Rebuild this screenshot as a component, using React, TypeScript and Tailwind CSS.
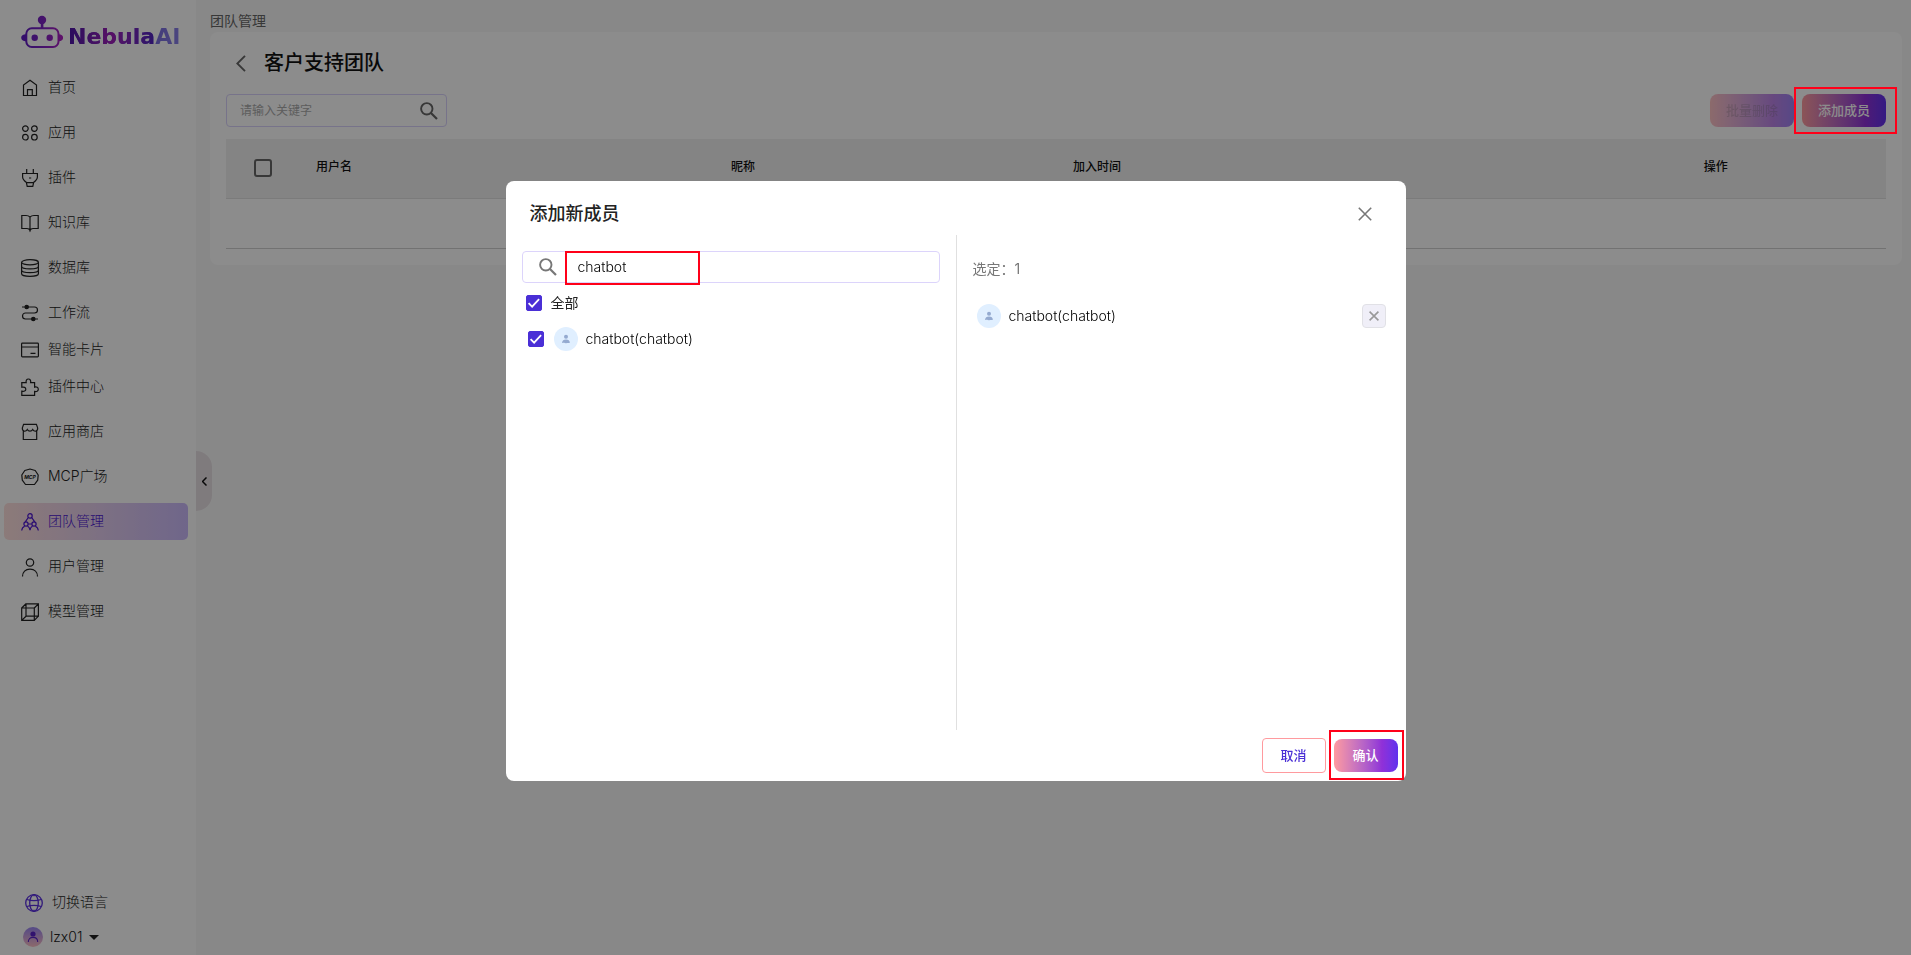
import { useState } from 'react';
import type { ReactNode } from 'react';

const navItems = [
  { label: '首页', icon: 'home' },
  { label: '应用', icon: 'apps' },
  { label: '插件', icon: 'plug' },
  { label: '知识库', icon: 'book' },
  { label: '数据库', icon: 'database' },
  { label: '工作流', icon: 'flow', tight: true },
  { label: '智能卡片', icon: 'card', tight: true },
  { label: '插件中心', icon: 'puzzle' },
  { label: '应用商店', icon: 'store' },
  { label: 'MCP广场', icon: 'mcp' },
  { label: '团队管理', icon: 'team', active: true },
  { label: '用户管理', icon: 'user' },
  { label: '模型管理', icon: 'cube' },
];

const icons: Record<string, ReactNode> = {
  home: <path d="M2.5 16.5V6L9 1.3 15.5 6v10.5zM6.5 16.5v-5.8h4.8v5.8" />,
  apps: (
    <>
      <circle cx="4.4" cy="4.6" r="2.8" />
      <circle cx="13.4" cy="4.6" r="2.8" />
      <circle cx="4.4" cy="13.2" r="2.8" />
      <circle cx="13.4" cy="13.2" r="2.8" />
    </>
  ),
  plug: <path d="M5.7 0v4.5M12.3 0v4.5M1 4.5h16M1.6 4.5v3.4c0 2.6 2.6 4.6 4.2 5.8h6.4c1.600-1.200 4.200-3.200 4.200-5.800V4.500M5.400 13.700l.8 3.600h5.600l.8-3.600M8 9h2.200" />,
  book: <path d="M9 3.200C8 2 6.500 1.500 5 1.500H.8v13H6c1.500 0 2.500.5 3 2 .5-1.500 1.500-2 3-2h5.200v-13H13c-1.500 0-3 .5-4 1.700zM9 3.200V17.500" />,
  database: (
    <>
      <ellipse cx="9" cy="3.300" rx="8.400" ry="2.600" />
      <path d="M.6 3.300v11.400c0 1.500 3.800 2.700 8.400 2.700s8.400-1.200 8.400-2.700V3.300M.6 7.200c0 1.500 3.800 2.600 8.400 2.600s8.400-1.100 8.400-2.600M.6 11c0 1.500 3.800 2.600 8.400 2.600s8.400-1.100 8.400-2.600" />
    </>
  ),
  flow: (
    <>
      <path d="M1 3h12.500a3 3 0 0 1 0 6h-9a3 3 0 0 0 0 6H17" />
      <circle cx="5.700" cy="3" r="1.700" fill="currentColor" />
      <circle cx="12.300" cy="15" r="1.700" fill="currentColor" />
    </>
  ),
  card: (
    <>
      <rect x=".6" y="2.200" width="16.800" height="13.600" rx=".8" />
      <path d="M.6 6h16.800M9.500 12.400h5" />
    </>
  ),
  puzzle: <path d="M.8 4.700h4.400c-.5-2 .4-3.700 2.200-3.700s2.700 1.700 2.200 3.700h4v4.400c2-.6 3.700.4 3.700 2.200s-1.700 2.600-3.700 2.100v4H.8v-4.200c2.300.5 4-.3 4-2s-1.700-2.500-4-2z" />,
  store: <path d="M2.300 8v8.500h13.400V8M2.600 1.300h12.800L16.700 5c0 4-3.500 4-5 1.500-1.200 2.200-4.200 2.200-5.400 0C4.800 9 1.300 9 1.300 5z" />,
  mcp: (
    <>
      <path d="M9 1l5.200 1.500 3 4.500-.5 5.200L13.500 16.500h-9L1.300 12.200.8 7l3-4.500z" strokeLinejoin="round" />
      <text x="9" y="11" textAnchor="middle" fontSize="5" fontWeight="700" fontStyle="italic" fill="currentColor" stroke="none">MCP</text>
    </>
  ),
  team: (
    <>
      <circle cx="9" cy="2.900" r="2.200" />
      <circle cx="5" cy="11" r="2.100" />
      <circle cx="13" cy="11" r="2.100" />
      <path d="M7.300 4.500L4.300 8.900M10.700 4.500l3 4.400M.7 17.500c.2-2.300 1.400-3.700 3-4.300M6.500 13c1.400.8 2.300 2.200 2.500 4.300.2-2.100 1.100-3.500 2.500-4.300M14.300 13.200c1.600.6 2.800 2 3 4.300M7.200 11h3.600" />
    </>
  ),
  user: (
    <>
      <circle cx="9" cy="4.500" r="3.700" />
      <path d="M1.500 18.500c0-4.500 3-7.300 7.500-7.300s7.500 2.800 7.500 7.300" />
    </>
  ),
  cube: <path d="M.7 5h12.600v12.400H.7zM5 .8h12.400v12.400H5zM.7 5L5 .8M13.300 5l4.100-4.200M.7 17.400L5 13.200M13.300 17.400l4.100-4.200" />,
};

function NavIcon({ name }: { name: string }) {
  return (
    <svg className="h-[18px] w-[18px] shrink-0 overflow-visible" viewBox="0 0 18 18" fill="none" stroke="currentColor" strokeWidth="1.2" aria-hidden="true">
      {icons[name]}
    </svg>
  );
}

function SearchIcon() {
  return (
    <svg className="h-[18px] w-[18px] shrink-0" viewBox="0 0 18 18" fill="none" stroke="currentColor" strokeWidth="1.9" aria-hidden="true">
      <circle cx="6.800" cy="6.800" r="5.700" />
      <path d="M11 11l6 6" strokeWidth="2.200" />
    </svg>
  );
}

function Cross({ className }: { className: string }) {
  return (
    <svg className={className} viewBox="0 0 14 14" fill="none" stroke="currentColor" strokeWidth="1.600" aria-hidden="true">
      <path d="M.8.8l12.400 12.400M13.200.8L.8 13.200" vectorEffect="non-scaling-stroke" />
    </svg>
  );
}

function Avatar() {
  return (
    <svg className="h-6 w-6 shrink-0" viewBox="0 0 24 24" aria-hidden="true">
      <circle cx="12" cy="12" r="12" fill="#e0efff" />
      <circle cx="12" cy="9.800" r="2" fill="#94aad0" />
      <path d="M8.200 15.800c0-2.200 1.500-3.200 3.800-3.200s3.800 1 3.800 3.200c0 .5-7.600.5-7.600 0z" fill="#94aad0" />
    </svg>
  );
}

function Checkbox({ id, checked, onChange }: { id: string; checked: boolean; onChange: () => void }) {
  return (
    <span className="relative flex h-4 w-4 shrink-0">
      <input
        id={id}
        type="checkbox"
        checked={checked}
        onChange={onChange}
        className="h-4 w-4 appearance-none rounded-xs border border-gray-400 checked:border-[#4a2fd6] checked:bg-[#4a2fd6]"
      />
      {checked && (
        <svg className="pointer-events-none absolute inset-0" viewBox="0 0 16 16" fill="none" stroke="#fff" strokeWidth="1.800" aria-hidden="true">
          <path d="M2.600 8.200l3.500 3.400 7-7.400" />
        </svg>
      )}
    </span>
  );
}

function Logo() {
  return (
    <a href="#home" className="flex h-[69px] items-start pl-5 pt-[15px]">
      <svg className="h-[34px] w-11 shrink-0" viewBox="0 0 44 34" fill="none" aria-hidden="true">
        <defs>
          <linearGradient id="robot" x1="0" y1="0" x2="44" y2="0" gradientUnits="userSpaceOnUse">
            <stop offset="0" stopColor="#5a1bc4" />
            <stop offset=".5" stopColor="#7c22c4" />
            <stop offset="1" stopColor="#b21fc0" />
          </linearGradient>
        </defs>
        <g fill="url(#robot)">
          <circle cx="22" cy="5" r="4.200" />
          <path d="M20.800 8h2.600v5h-2.600zM6 19.300v7c-3 0-4.800-1.500-4.800-3.500S3 19.300 6 19.300zM38.500 19.300v7c3 0 4.600-1.500 4.600-3.500s-1.600-3.500-4.600-3.500z" />
          <circle cx="14.700" cy="22.700" r="3.200" />
          <circle cx="29.700" cy="22.700" r="3.200" />
        </g>
        <rect x="6.300" y="13.300" width="32.200" height="18.700" rx="5.500" stroke="url(#robot)" strokeWidth="2" />
      </svg>
      <span className="ml-1 mt-2 bg-linear-to-r from-[#4c22c0] to-[#8a80e8] bg-clip-text font-['DejaVu_Sans',sans-serif] text-[22px] leading-7 font-bold text-transparent">
        <span className="bg-linear-to-r from-[#4c14a8] via-[#a01cb8] to-[#4f22c0] bg-clip-text">Nebula</span>AI
      </span>
    </a>
  );
}

function Sidebar() {
  return (
    <aside className="relative flex w-[196px] shrink-0 flex-col bg-white text-sm font-light text-[#222]">
      <Logo />
      <nav className="flex flex-1 flex-col px-1">
        {navItems.map((item) => (
          <a
            key={item.label}
            href={`#${item.icon}`}
            className={`mr-1 flex h-[37px] items-center gap-[9px] rounded-[5px] pl-[17px] ${item.tight ? '' : 'mb-2'} ${
              item.active ? 'bg-linear-to-r from-[#ffe0dd] to-[#cbbafb] text-[#4a14d0]' : ''
            }`}
          >
            <NavIcon name={item.icon} />
            <span className="pb-0.5">{item.label}</span>
          </a>
        ))}
      </nav>
      <div className="flex flex-col gap-[14px] pb-2">
        <button className="flex h-5 items-center gap-[9px] pl-[25px] text-left">
          <svg className="h-[18px] w-[18px]" viewBox="0 0 18 18" fill="none" stroke="#5a30e0" strokeWidth="1.300" aria-hidden="true">
            <circle cx="9" cy="9" r="8.300" />
            <ellipse cx="9" cy="9" rx="4.300" ry="8.300" />
            <path d="M1.800 5.500c4 1.300 10.400 1.300 14.400 0M1.800 12.500c4-1.300 10.400-1.300 14.400 0M9 .7v1.500M9 15.800v1.500" />
          </svg>
          <span className="pb-0.5">切换语言</span>
        </button>
        <button className="flex h-5 items-center gap-[7px] pl-[23px] text-left">
          <svg className="h-5 w-5" viewBox="0 0 20 20" aria-hidden="true">
            <defs>
              <linearGradient id="me" x1="0" y1="0" x2="0" y2="1">
                <stop offset="0" stopColor="#9a86f5" />
                <stop offset="1" stopColor="#ffc0c4" />
              </linearGradient>
            </defs>
            <circle cx="10" cy="10" r="10" fill="url(#me)" />
            <circle cx="10" cy="7" r="2.600" fill="#5a22c8" />
            <path d="M5.300 15c0-3 2-4.600 4.700-4.600s4.700 1.600 4.700 4.600" fill="none" stroke="#5a22c8" strokeWidth="1.100" />
          </svg>
          lzx01
          <svg className="h-[5px] w-[10px]" viewBox="0 0 10 5" fill="#222" aria-hidden="true">
            <path d="M0 0h10L5 5z" />
          </svg>
        </button>
      </div>
      <button aria-label="收起" className="absolute top-[451px] left-full flex h-[60px] w-4 items-center justify-center rounded-r-2xl bg-[#e8e0e4]">
        <svg className="h-[9px] w-[5px]" viewBox="0 0 5 9" fill="none" stroke="#111" strokeWidth="1.500" aria-hidden="true">
          <path d="M4.500.5l-4 4 4 4" />
        </svg>
      </button>
    </aside>
  );
}

function TeamPage() {
  return (
    <main className="min-w-0 flex-1 bg-[#f8f8f8] pl-[14px] pr-[9px]">
      <div className="flex h-8 items-center pt-[10px] text-sm text-[#666]">团队管理</div>
      <section className="rounded-lg bg-white px-4 pb-4">
        <div className="flex h-[62px] items-center pl-[10px]">
          <button aria-label="返回" className="w-[10px] text-[#666]">
            <svg className="h-[17px] w-[10px]" viewBox="0 0 10 17" fill="none" stroke="currentColor" strokeWidth="1.900" aria-hidden="true">
              <path d="M9 .8L1.300 8.500 9 16.200" />
            </svg>
          </button>
          <h1 className="ml-[18px] text-xl font-medium text-[#111]">客户支持团队</h1>
        </div>
        <div className="flex items-start justify-between">
          <label className="flex h-[33px] w-[221px] items-center rounded-sm border border-[#d9d2fb] pr-2 pl-[13px] text-[#666]">
            <input aria-label="关键字" placeholder="请输入关键字" className="min-w-0 flex-1 text-xs outline-none placeholder:text-[#aaa]" />
            <SearchIcon />
          </label>
          <div className="flex items-center gap-2 text-[13px] font-medium text-white">
            <button disabled className="h-[33px] w-[84px] rounded-lg bg-linear-to-r from-[#ff9a9e] via-[#9030d8] via-75% to-[#6030ee] text-black/25 opacity-60">批量删除</button>
            <button className="h-[33px] w-[84px] rounded-lg bg-linear-to-r from-[#ff9a9e] via-[#9030d8] via-75% to-[#6030ee]">添加成员</button>
          </div>
        </div>
        <table className="mt-3 w-full table-fixed text-left text-xs text-[#111]">
          <thead>
            <tr className="h-[59px] border-b border-[#e0e0e0] bg-[#f0f0f0]">
              <th className="w-[74px] pl-7">
                <input type="checkbox" aria-label="全选" className="block h-[18px] w-[18px] appearance-none rounded-[3px] border-2 border-[#666]" />
              </th>
              <th className="w-[25%] pb-0.5 pl-4 font-medium">用户名</th>
              <th className="w-[20.6%] pb-0.5 pl-4 font-medium">昵称</th>
              <th className="w-[38%] pb-0.5 pl-4 font-medium">加入时间</th>
              <th className="pb-0.5 pl-4 font-medium">操作</th>
            </tr>
          </thead>
          <tbody>
            <tr className="h-[50px] border-b border-[#d0d0d0]">
              <td colSpan={5} />
            </tr>
          </tbody>
        </table>
      </section>
    </main>
  );
}

function AddMemberDialog() {
  const [keyword, setKeyword] = useState('chatbot');
  const [selected, setSelected] = useState(true);
  const toggle = () => setSelected(!selected);

  return (
    <div role="dialog" aria-labelledby="dialog-title" className="flex h-[600px] w-[900px] flex-col rounded-lg bg-white text-sm text-[#222]">
      <header className="flex h-[54px] items-center justify-between pt-3 pr-[34px] pl-6">
        <h2 id="dialog-title" className="text-lg font-medium">添加新成员</h2>
        <button aria-label="关闭" className="text-[#777]">
          <Cross className="h-[14px] w-[14px]" />
        </button>
      </header>
      <div className="flex flex-1">
        <div className="w-1/2 px-4 pt-4">
          <label className="relative flex h-8 items-center rounded-sm border border-[#dcd4fb] pl-4 text-[#777]">
            <SearchIcon />
            <input
              aria-label="搜索成员"
              value={keyword}
              onChange={(e) => setKeyword(e.target.value)}
              className="ml-[21px] min-w-0 flex-1 font-light text-black outline-none"
            />
            <span className="pointer-events-none absolute -top-px left-[42px] h-[34px] w-[135px] border-2 border-[#ff0019]" />
          </label>
          <div className="mt-[10px] flex h-5 items-center gap-[9px] pl-1">
            <Checkbox id="all" checked={selected} onChange={toggle} />
            <label htmlFor="all">全部</label>
          </div>
          <div className="mt-[14px] flex h-6 items-center pl-[6px]">
            <Checkbox id="chatbot" checked={selected} onChange={toggle} />
            <label htmlFor="chatbot" className="ml-[10px] flex items-center gap-2 font-light text-black">
              <Avatar />
              chatbot(chatbot)
            </label>
          </div>
        </div>
        <div className="w-1/2 border-l border-[#e0e0e0] pt-6 pr-5 pl-4">
          <p className="text-[#777]">选定：{selected ? 1 : 0}</p>
          {selected && (
            <div className="mt-[25px] flex items-center gap-2 pl-1 font-light text-black">
              <Avatar />
              chatbot(chatbot)
              <button aria-label="移除" onClick={toggle} className="ml-auto flex h-6 w-6 items-center justify-center rounded-sm border border-[#e1e1e6] bg-[#f0eff8] text-[#999]">
                <Cross className="h-[10px] w-[10px]" />
              </button>
            </div>
          )}
        </div>
      </div>
      <footer className="flex h-[51px] items-center justify-end gap-2 pr-2 text-[13px] font-medium">
        <button className="h-[35px] w-16 rounded-sm border border-[#ff9a9e] text-[#4a2fd6]">取消</button>
        <span className="relative flex">
          <button className="h-[33px] w-16 rounded-lg bg-linear-to-r from-[#ff9a9e] via-[#9030d8] via-75% to-[#6030ee] text-white">确认</button>
          <span className="pointer-events-none absolute -top-[9px] -left-[5px] h-[50px] w-[75px] border-2 border-[#ff0019]" />
        </span>
      </footer>
    </div>
  );
}

export default function App() {
  return (
    <div className="flex min-h-screen font-['Inter','Noto_Sans_CJK_SC',sans-serif]">
      <Sidebar />
      <TeamPage />
      <div className="fixed inset-0 flex items-center justify-center bg-black/45 pt-[7px]">
        <AddMemberDialog />
        <span className="pointer-events-none absolute top-[87px] right-[14px] h-[47px] w-[103px] border-2 border-[#ff0019]" />
      </div>
    </div>
  );
}
